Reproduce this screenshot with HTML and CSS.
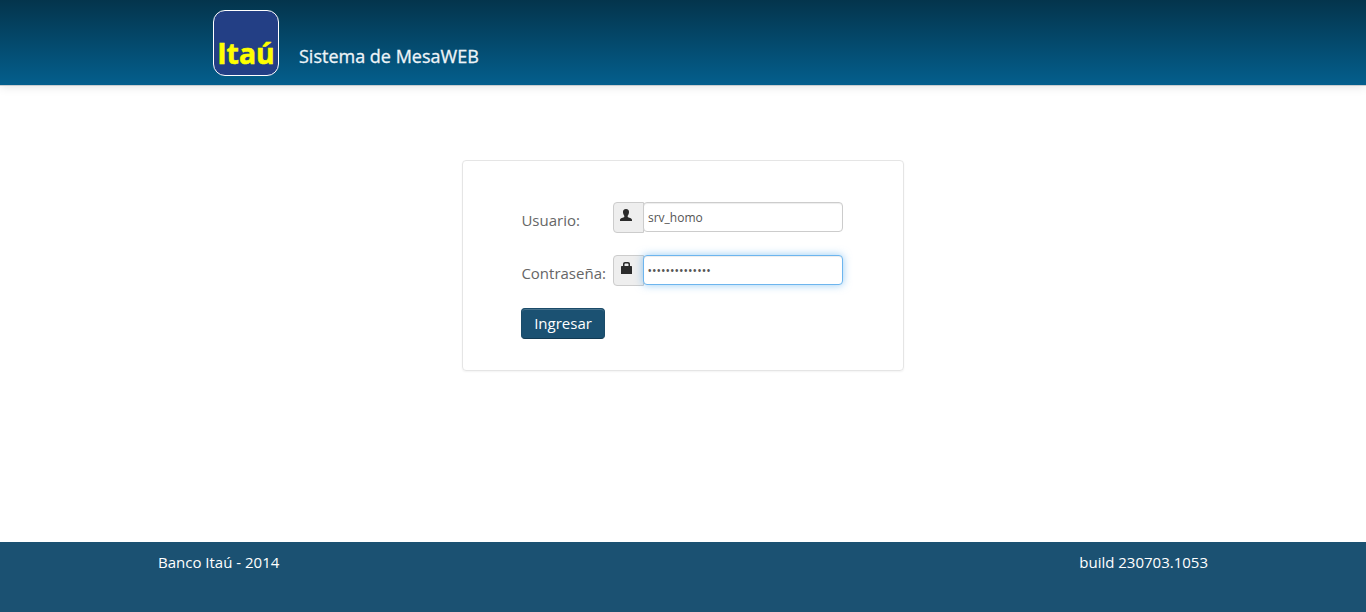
FILE: index.html
```html
<!DOCTYPE html>
<html lang="es">
<head>
<meta charset="utf-8">
<title>Sistema de MesaWEB</title>
<link rel="stylesheet" href="styles.css">
</head>
<body>
<header class="header">
  <svg class="logo" viewBox="0 0 66 66" role="img" aria-label="Itaú">
    <rect x=".5" y=".5" width="65" height="65" rx="11.5" fill="#233f85" stroke="#fff"/>
    <text class="logo-text" x="4.2" y="54" textLength="57.5" lengthAdjust="spacingAndGlyphs">Itaú</text>
  </svg>
  <h1 class="title">Sistema de MesaWEB</h1>
</header>
<main class="main">
  <form class="card">
    <div class="row">
      <label class="label" for="user">Usuario:</label>
      <span class="addon"><svg class="icon" viewBox="0 0 14 14"><path d="M7 1C4.8 1 3.8 2.5 4 4.5C4.1 6.2 4.9 7 5.3 7.8V9C4.6 9.6 1 10.1 1 12V13H13V12C13 10.1 9.4 9.6 8.7 9V7.8C9.1 7 9.9 6.2 10 4.5C10.2 2.5 9.2 1 7 1Z"/></svg></span>
      <input class="input" id="user" type="text" value="srv_homo">
    </div>
    <div class="row">
      <label class="label" for="pass">Contraseña:</label>
      <span class="addon"><svg class="icon" viewBox="0 0 14 14"><path fill-rule="evenodd" d="M4 5V3C4 1.8 4.8 1 6 1H9C10.2 1 11 1.8 11 3V5H12.3C12.8 5 13 5.3 13 5.7V13H2V5.7C2 5.3 2.2 5 2.7 5ZM5.5 5H9.5V3.2C9.5 2.7 9.2 2.4 8.7 2.4H6.3C5.8 2.4 5.5 2.7 5.5 3.2Z"/></svg></span>
      <input class="input focused" id="pass" type="text" value="••••••••••••••">
    </div>
    <button class="button" type="button">Ingresar</button>
  </form>
</main>
<footer class="footer"><span>Banco Itaú - 2014</span><span>build 230703.1053</span></footer>
</body>
</html>
```
FILE: styles.css
```css
* { box-sizing: border-box; }
body {
  margin: 0;
  height: 612px;
  display: flex;
  flex-direction: column;
  overflow: hidden;
  background: #fff;
  color: #666;
  font: 15px/20px "Open Sans", sans-serif;
}
.header {
  height: 85px;
  flex: none;
  display: flex;
  align-items: flex-start;
  padding: 10px 0 0 213px;
  background: linear-gradient(#04344c, #045f8d);
  box-shadow: 0 1px 0 #c9cdd0, 0 1px 10px rgba(0, 0, 0, .13);
}
.logo { width: 66px; height: 66px; display: block; }
.logo-text {
  font: bold 29px "Open Sans", sans-serif;
  fill: #ff0;
  stroke: #ff0;
  stroke-width: .6px;
}
.title {
  margin: 36px 0 0 20px;
  color: #eef4f8;
  font-size: 18px;
  font-weight: 400;
  line-height: 20px;
  -webkit-text-stroke: .3px #eef4f8;
}
.main { flex: 1; padding-top: 75px; }
.card {
  width: 442px;
  height: 211px;
  margin: 0 auto;
  padding: 42px 58px 0;
  border: 1px solid #e5e5e5;
  border-radius: 4px;
  box-shadow: 0 1px 2px rgba(0, 0, 0, .05);
}
.row { display: flex; height: 31px; margin-bottom: 22px; margin-top: -1px; }
.row + .row { margin-top: 0; }
.label { width: 92px; padding: 8px 0 0 .4px; }
.addon {
  width: 31px;
  height: 31px;
  padding: 5px;
  background: #eee;
  border: 1px solid #ccc;
  border-radius: 4px 0 0 4px;
}
.icon { width: 14px; height: 14px; display: block; fill: #2b2b2b; }
.input {
  width: 200px;
  height: 30px;
  margin: 0 0 0 -1px;
  padding: 4px;
  color: #555;
  background: #fff;
  border: 1px solid #ccc;
  border-radius: 4px;
  box-shadow: inset 0 1px 1px rgba(0, 0, 0, .075);
  font: 12px/20px "Open Sans", sans-serif;
  outline: 0;
}
.focused {
  padding-left: 3.5px;
  border-color: #6db5ee;
  box-shadow: inset 0 1px 1px rgba(0, 0, 0, .075), 0 0 8px rgba(82, 168, 236, .6);
}
.button {
  width: 84px;
  height: 31px;
  display: block;
  padding: 0 0 2px;
  color: #fff;
  background: #1b5172;
  border: 1px solid #1b4b69;
  border-bottom-color: #123a53;
  border-radius: 4px;
  box-shadow: inset 0 1px 0 rgba(255, 255, 255, .2);
  font: 15px/20px "Open Sans", sans-serif;
}
.footer {
  height: 70px;
  flex: none;
  display: flex;
  justify-content: space-between;
  padding: 10px 158px 0;
  background: #1b5172;
  color: #fff;
}
```
